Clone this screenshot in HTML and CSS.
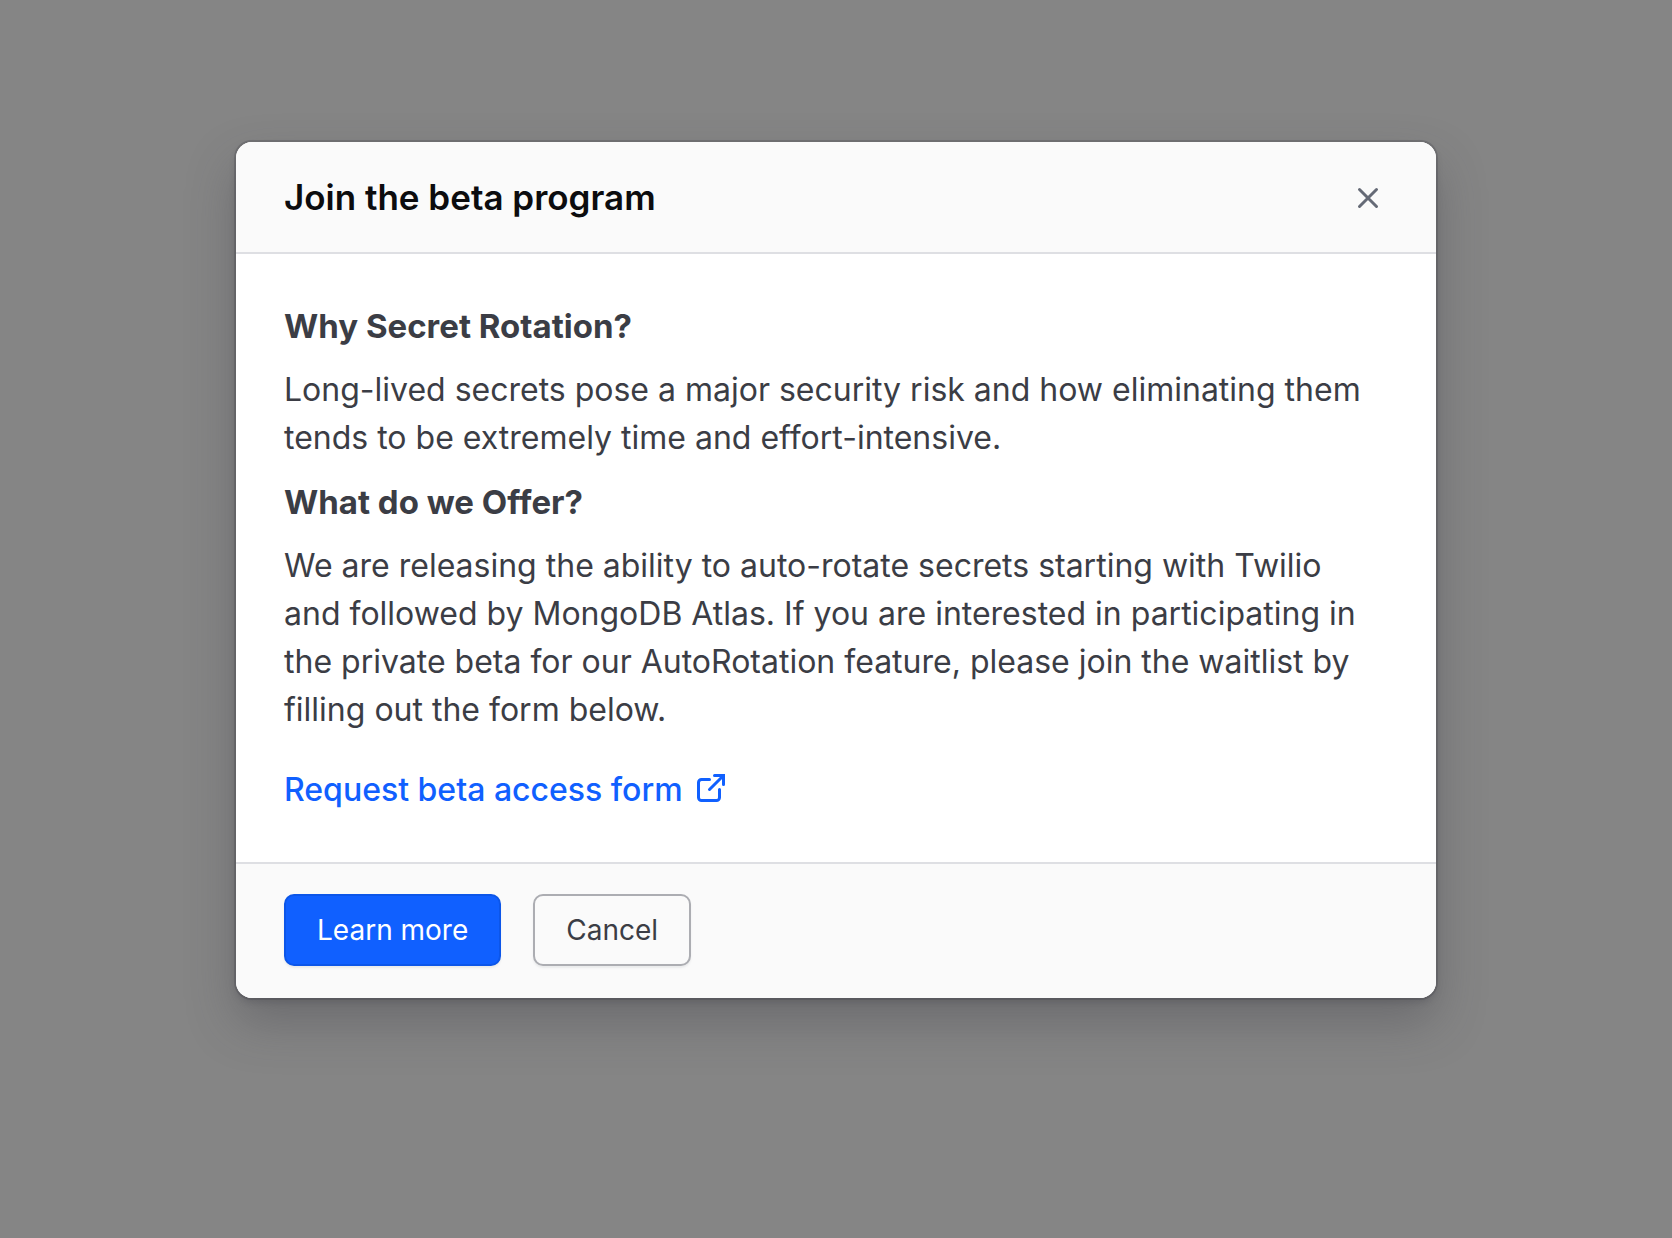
FILE: index.html
```html
<!DOCTYPE html>
<html lang="en">
<head>
    <meta charset="UTF-8">
    <title>Join the beta program</title>
    <meta name="viewport" content="width=device-width, initial-scale=1">
    <link rel="stylesheet" href="styles.css">
</head>
<body>
    <div class="modal" role="dialog" aria-modal="true" aria-labelledby="modal-title">
        <header class="modal-header">
            <h1 class="modal-title" id="modal-title">Join the beta program</h1>
            <button class="close-button" type="button" aria-label="Close">
                <svg width="32" height="32" viewBox="0 0 32 32" fill="none" stroke="currentColor" stroke-width="3" stroke-linecap="round">
                    <path d="M7.5 8.5l17 17M24.5 8.5l-17 17"/>
                </svg>
            </button>
        </header>

        <div class="modal-body">
            <h2>Why Secret Rotation?</h2>
            <p>Long-lived secrets pose a major security risk and how eliminating them tends to be extremely time and effort-intensive.</p>
            <h2>What do we Offer?</h2>
            <p>We are releasing the ability to auto-rotate secrets starting with Twilio and followed by MongoDB Atlas. If you are interested in participating in the private beta for our AutoRotation feature, please join the waitlist by filling out the form below.</p>
            <a class="form-link" href="#">
                Request beta access form
                <svg width="32" height="32" viewBox="0 0 32 32" fill="none" stroke="currentColor" stroke-width="3" stroke-linecap="round" aria-hidden="true">
                    <path d="M14.5 7.5h-8a3 3 0 0 0-3 3v15a3 3 0 0 0 3 3h15a3 3 0 0 0 3-3v-8"/>
                    <path d="M19.5 3.5h9v9M28 4L14.5 17.5"/>
                </svg>
            </a>
        </div>

        <footer class="modal-footer">
            <button class="button button-primary" type="button">Learn more</button>
            <button class="button button-secondary" type="button">Cancel</button>
        </footer>
    </div>
</body>
</html>
```

FILE: styles.css
```css
* {
    box-sizing: border-box;
}

body {
    margin: 0;
    padding: 142px 24px;
    min-height: 100vh;
    background: #858585;
    color: #3b3d45;
    font-family: Inter, "Liberation Sans", sans-serif;
    font-size: 32px;
    line-height: 48px;
}

.modal {
    max-width: 1200px;
    margin: 0 auto;
    background: white;
    border-radius: 16px;
    overflow: hidden;
    box-shadow: 0 0 0 2px #3b3d4540, 0 4px 6px #3b3d4540, 0 24px 48px #3b3d4559;
}

.modal-header {
    display: flex;
    justify-content: space-between;
    align-items: center;
    padding: 31px 48px;
    background: #fafafa;
    border-bottom: 2px solid #dedfe3;
}

.modal-title {
    margin: 0;
    color: #0c0c0e;
    font-size: 35px;
    font-weight: 600;
}

.close-button {
    display: flex;
    padding: 4px;
    background: none;
    border: none;
    color: #656a76;
    cursor: pointer;
}

.modal-body {
    padding: 48px 64px 48px 48px;
}

.modal-body h2 {
    margin: 0 0 16px;
    font-size: 33px;
    font-weight: 700;
}

.modal-body p {
    margin: 0 0 16px;
}

.form-link {
    display: flex;
    align-items: center;
    gap: 12px;
    margin-top: 32px;
    color: #1060ff;
    font-weight: 500;
    text-decoration: none;
}

.form-link svg {
    margin-bottom: 4px;
}

.form-link:hover {
    text-decoration: underline;
}

.modal-footer {
    display: flex;
    gap: 32px;
    padding: 30px 48px 32px;
    background: #fafafa;
    border-top: 2px solid #dedfe3;
}

.button {
    height: 72px;
    padding: 0 31px;
    border: 2px solid #0c56e9;
    border-radius: 10px;
    box-shadow: 0 2px 2px #656a761a;
    font-family: inherit;
    font-size: 28px;
    cursor: pointer;
}

.button-primary {
    background: #1060ff;
    color: white;
}

.button-secondary {
    background: #fafafa;
    border-color: #acadb2;
    color: #3b3d45;
}
```
